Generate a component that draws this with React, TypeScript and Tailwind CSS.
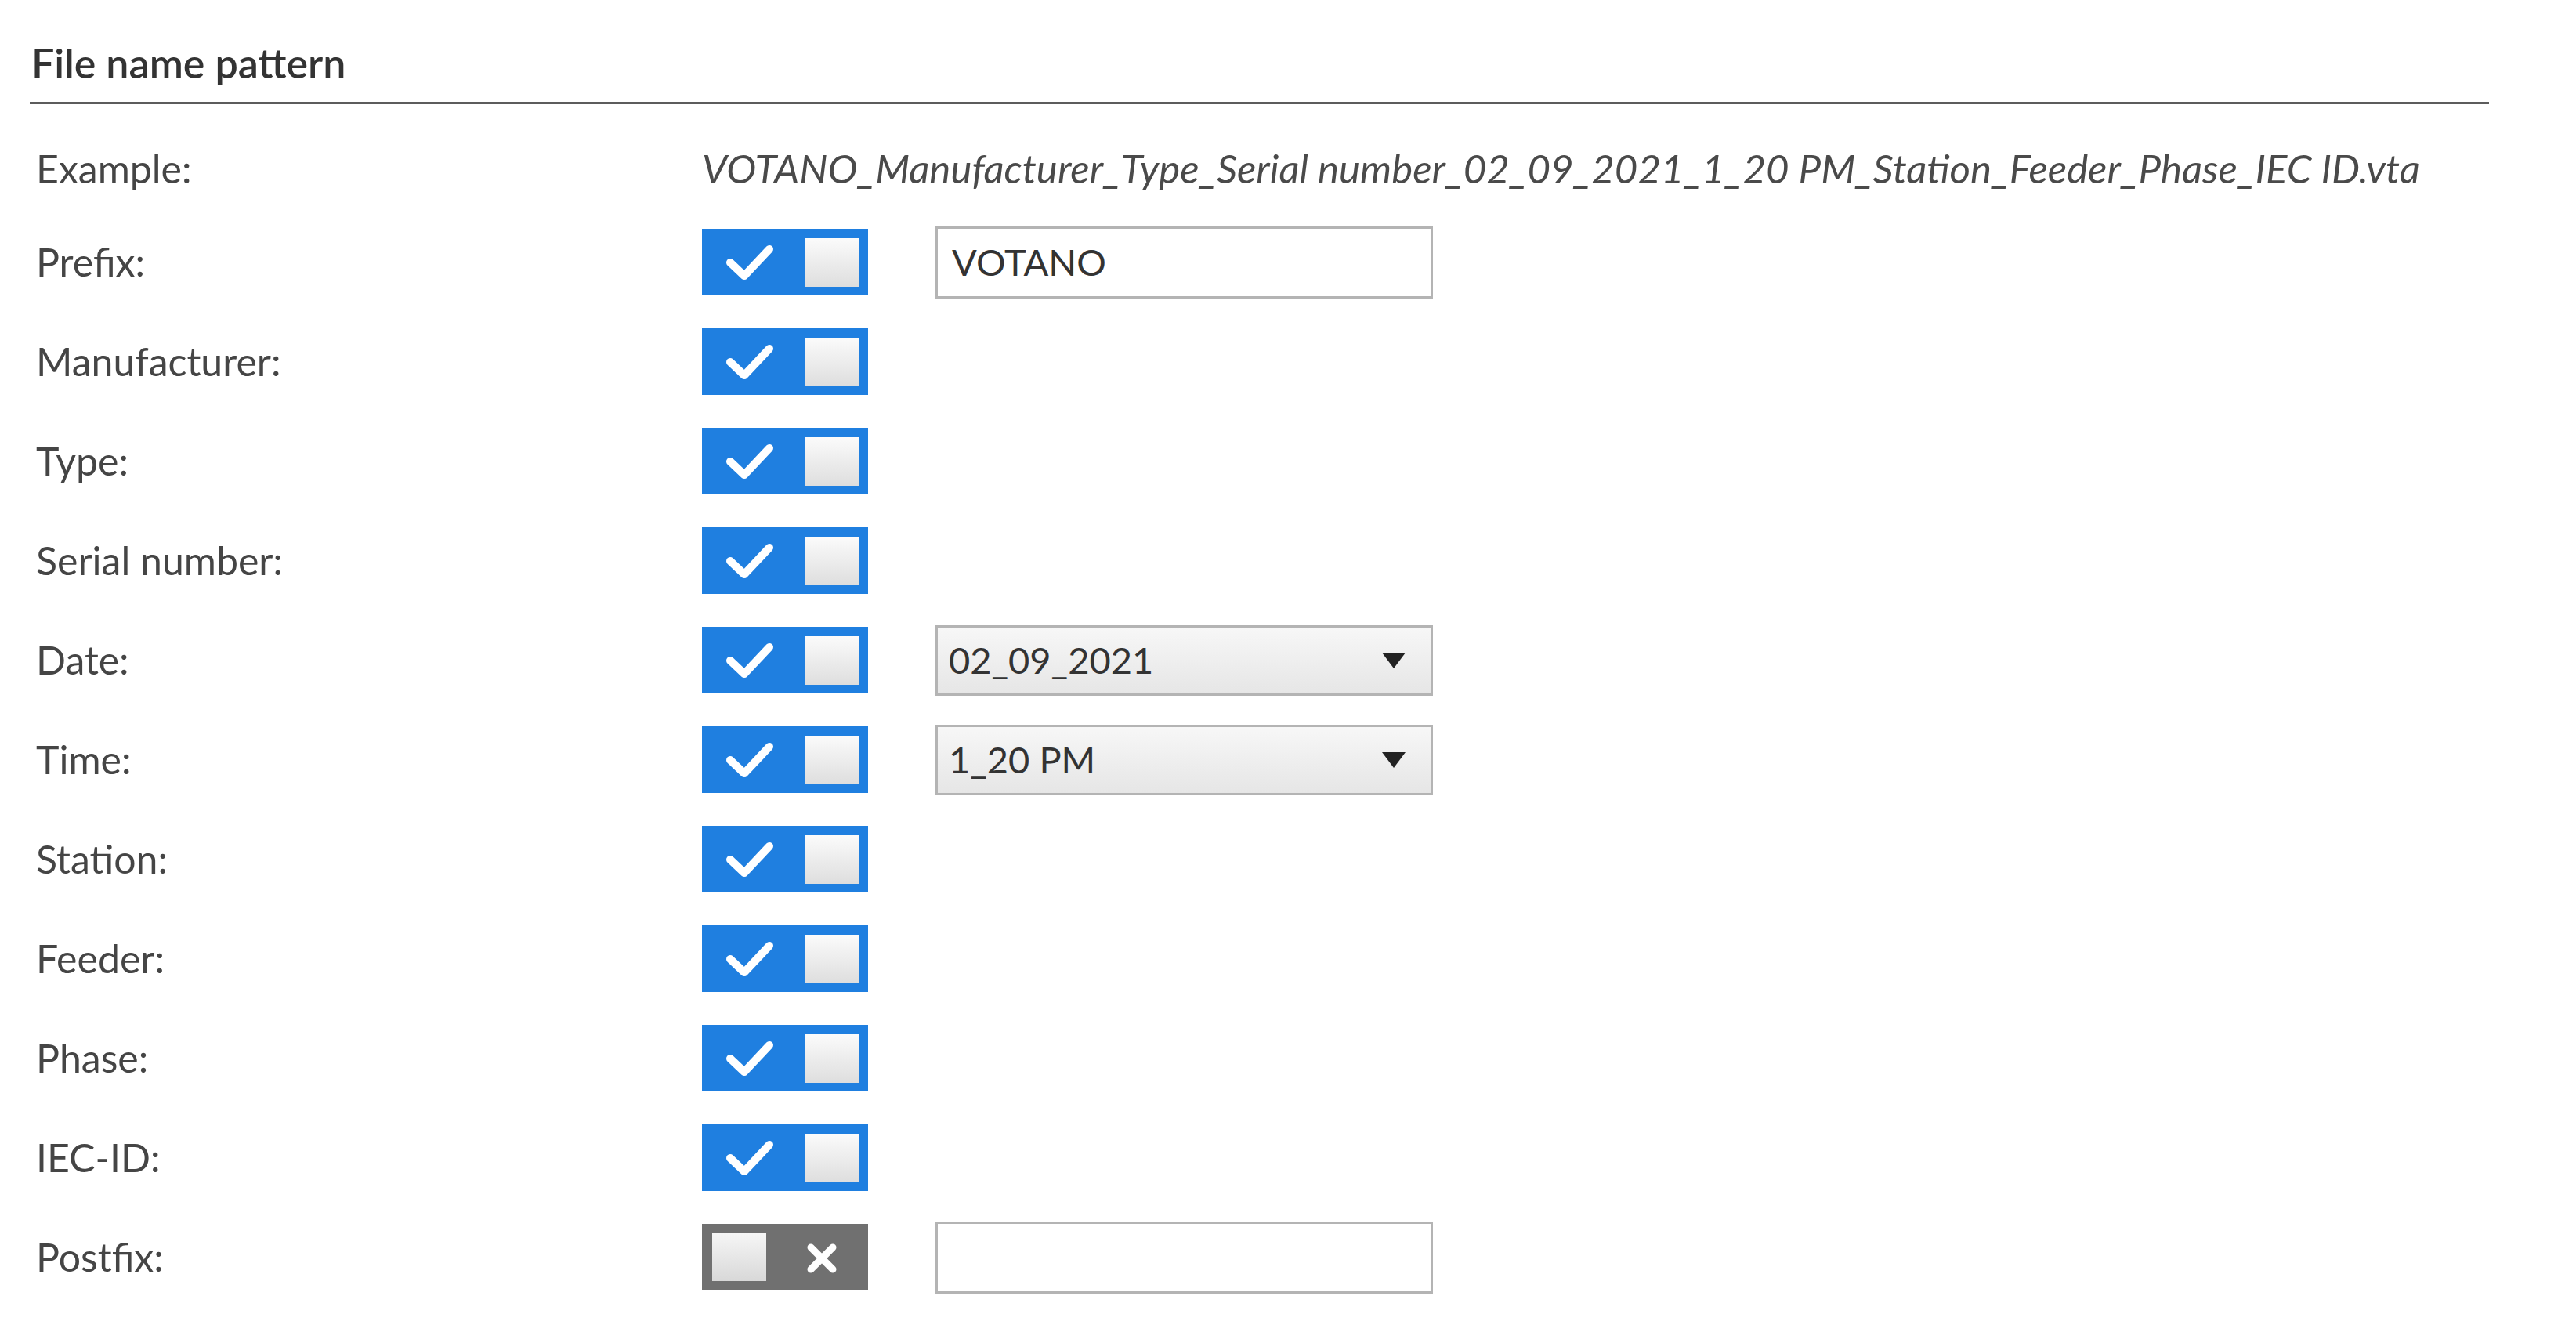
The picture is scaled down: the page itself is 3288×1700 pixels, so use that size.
import React from "react";

type Row = {
  label: string;
  on: boolean;
  field?: "input" | "select";
  value?: string;
};

const rows: Row[] = [
  { label: "Prefix:", on: true, field: "input", value: "VOTANO" },
  { label: "Manufacturer:", on: true },
  { label: "Type:", on: true },
  { label: "Serial number:", on: true },
  { label: "Date:", on: true, field: "select", value: "02_09_2021" },
  { label: "Time:", on: true, field: "select", value: "1_20 PM" },
  { label: "Station:", on: true },
  { label: "Feeder:", on: true },
  { label: "Phase:", on: true },
  { label: "IEC-ID:", on: true },
  { label: "Postfix:", on: false, field: "input", value: "" },
];

const Toggle = ({ on }: { on: boolean }) => {
  if (on) {
    return (
      <div className="relative shrink-0 w-[212px] h-[85px] bg-[#1f7fe0] flex items-center justify-end pr-[11px]">
        <svg className="absolute left-0 top-0" width="212" height="85" viewBox="0 0 212 85">
          <polyline
            points="36,43 54,60 86,26"
            fill="none"
            stroke="#fff"
            strokeWidth="10"
            strokeLinecap="round"
            strokeLinejoin="round"
          />
        </svg>
        <div className="w-[70px] h-[62px] bg-gradient-to-b from-[#fbfbfb] to-[#dedede]" />
      </div>
    );
  }
  return (
    <div className="relative shrink-0 w-[212px] h-[85px] bg-[#707070] flex items-center pl-[13px]">
      <div className="w-[69px] h-[61px] bg-gradient-to-b from-[#f6f6f6] to-[#d8d8d8]" />
      <svg className="absolute left-0 top-0" width="212" height="85" viewBox="0 0 212 85">
        <path
          d="M139 30 L167 58 M167 30 L139 58"
          fill="none"
          stroke="#fff"
          strokeWidth="9"
          strokeLinecap="round"
        />
      </svg>
    </div>
  );
};

const Field = ({ row }: { row: Row }) => {
  if (row.field === "input") {
    return (
      <div className="ml-[86px] w-[635px] h-[92px] border-[3px] border-[#b4b4b4] bg-white flex items-center pl-[18px] text-[47px] text-[#333]">
        {row.value}
      </div>
    );
  }
  if (row.field === "select") {
    return (
      <div className="ml-[86px] w-[635px] h-[90px] border-[3px] border-[#b4b4b4] bg-gradient-to-b from-[#f7f7f7] to-[#e6e6e6] flex items-center justify-between pl-[14px] pr-[32px] text-[47px] text-[#333]">
        <span>{row.value}</span>
        <svg width="30" height="20" viewBox="0 0 30 20">
          <polygon points="0,0 30,0 15,20" fill="#222" />
        </svg>
      </div>
    );
  }
  return null;
};

const App = () => {
  return (
    <div className="w-[3288px] h-[1700px] bg-white font-['Segoe_UI',Lato,sans-serif] text-[#454545]">
      <div className="pl-[38px] pr-[111px] pt-[44px]">
        <h2 className="pl-[2px] text-[52px] leading-[72px] font-semibold text-[#333]">
          File name pattern
        </h2>
        <div className="mt-[14px] h-[3px] bg-[#5c5c5c]" />
        <div className="pl-[8px] pt-[26px]">
          <div className="flex items-center h-[112px]">
            <span className="w-[850px] shrink-0 text-[50px]">Example:</span>
            <span className="text-[51px] italic text-[#4a4a4a] whitespace-nowrap">
              VOTANO_Manufacturer_Type_Serial number_02_09_2021_1_20 PM_Station_Feeder_Phase_IEC ID.vta
            </span>
          </div>
          {rows.map((row) => (
            <div key={row.label} className="flex items-center h-[127px]">
              <span className="w-[850px] shrink-0 text-[50px]">{row.label}</span>
              <Toggle on={row.on} />
              <Field row={row} />
            </div>
          ))}
        </div>
      </div>
    </div>
  );
};

export default App;
